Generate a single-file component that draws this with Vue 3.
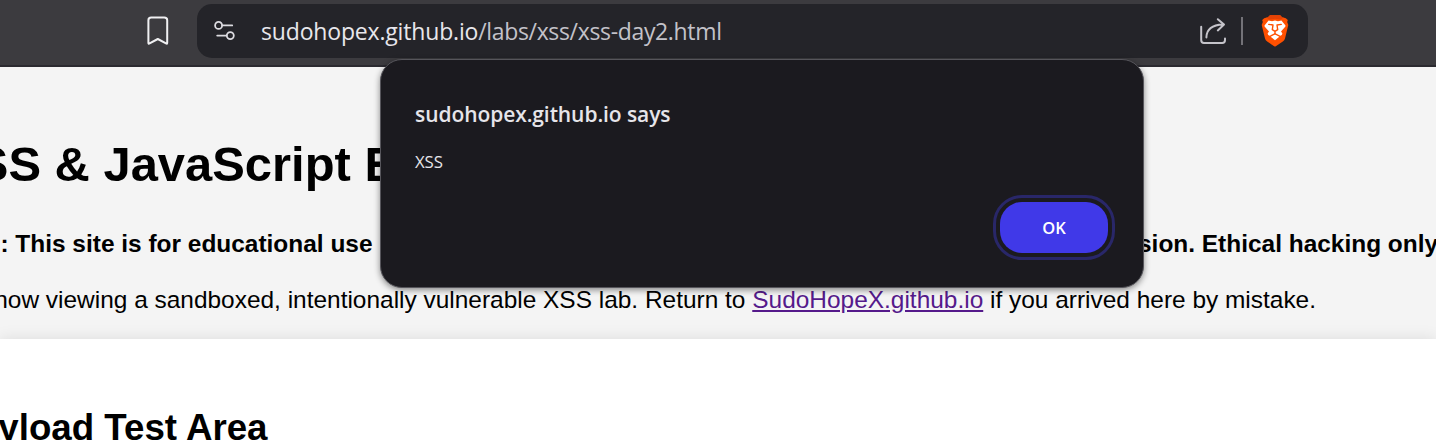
<script setup>
const host = 'sudohopex.github.io'
const path = '/labs/xss/xss-day2.html'
</script>

<template>
  <div class="browser">
    <header class="toolbar">
      <svg class="bookmark" viewBox="0 0 24 30" width="24" height="30">
        <path d="M2.4 27V4.3Q2.4 1.6 5.2 1.6H18.2Q21.2 1.6 21.2 4.3V27Q21.2 28.2 20 27.4L11.8 23L3.6 27.4Q2.4 28.2 2.4 27Z" />
      </svg>
      <div class="address">
        <svg class="tune" viewBox="0 0 22 20" width="22" height="20">
          <circle cx="4.6" cy="4.4" r="3.5" />
          <path d="M8.2 4.4H18.2M3.2 14.6H12.6" />
          <circle cx="16.3" cy="14.6" r="3.5" />
        </svg>
        <div class="url"><span class="host">{{ host }}</span><span class="path">{{ path }}</span></div>
        <svg class="share" viewBox="0 0 28 28" width="28" height="28">
          <path d="M2.2 9.8V23Q2.2 25.9 5 25.9H23.2Q26 25.9 26 23V21.6" />
          <path d="M7.4 20.4C7.6 12.6 13 8 24 7.6M18.8 2.2L25 7.6L18.8 13.4" />
        </svg>
        <i class="divider"></i>
        <svg class="brave" viewBox="0 0 28 32" width="28" height="32">
          <path fill="#ff5000" d="M9 0.2H19.2L21.4 2.5Q24.6 1.9 26.8 5L26.2 7L27.3 10L24 23.5Q23.5 25.4 21.8 26.6L14.8 31.2Q14 31.7 13.2 31.2L6.2 26.6Q4.5 25.4 4 23.5L.7 10L1.8 7L1.2 5Q3.4 1.9 6.6 2.5Z" />
          <path fill="#e54205" d="M9 0.2H19.2L21.4 2.5L22.7 2.3L20 4.6L14 3.8L8 4.6L5.3 2.3L6.6 2.5Z" />
          <path fill="#fff" d="M7.6 5.6L11 6.2L14 5.4L17 6.2L20.4 5.6L24.3 10.2Q24.8 11.1 24 12L20 16.4L21.4 18.4Q21.2 20.4 19.3 20.7L14 18L8.7 20.7Q6.8 20.4 6.6 18.4L8 16.4L4 12Q3.2 11.1 3.7 10.2Z" />
          <path fill="#fff" d="M14 19.4L18.3 21.8L14 25.2L9.7 21.8Z" />
          <path class="face" d="M7.8 9.4L12 10L11.3 14.6L14 16.4L16.7 14.6L16 10L20.2 9.4M14 16.4V19" />
        </svg>
      </div>
    </header>

    <main class="page">
      <section class="intro">
        <h1><span>SS &amp; JavaScript E</span></h1>
        <p class="warning">
          <strong class="lead"><span>: This site is for educational use</span></strong>
          <strong class="tail">sion. Ethical hacking only</strong>
        </p>
        <p class="notice">
          <span>now viewing a sandboxed, intentionally vulnerable XSS lab. Return to <a>SudoHopeX.github.io</a> if you arrived here by mistake.</span>
        </p>
      </section>
      <section class="card">
        <h2><span>yload Test Area</span></h2>
      </section>
    </main>

    <div class="dialog" role="alertdialog">
      <div class="title">{{ host }} says</div>
      <div class="message">XSS</div>
      <div class="actions"><button>OK</button></div>
    </div>
  </div>
</template>

<style>
html, body { margin: 0; overflow: hidden; }
</style>

<style scoped>
.browser {
  position: relative;
  width: 1436px;
  height: 440px;
  overflow: hidden;
  background: #f4f4f4;
  font-family: "Liberation Sans", Arial, sans-serif;
}
.toolbar {
  box-sizing: border-box;
  display: flex;
  align-items: flex-start;
  height: 67px;
  padding: 4px 128px 0 146px;
  background: #3c3b3f;
  border-bottom: 2px solid #2b2a30;
}
svg { display: block; flex: none; fill: none; stroke-linecap: round; stroke-linejoin: round; }
.bookmark { margin-top: 12px; stroke: #f0f0f2; stroke-width: 2; }
.address {
  box-sizing: border-box;
  display: flex;
  align-items: center;
  flex: 1;
  height: 54px;
  margin-left: 27px;
  padding: 0 19px 0 17px;
  border-radius: 15px;
  background: #242429;
}
.tune { stroke: #dcdbe0; stroke-width: 1.8; }
.url {
  flex: 1;
  margin-left: 25px;
  font-family: "Open Sans", "Noto Sans", sans-serif;
  font-size: 23px;
  line-height: 32px;
  white-space: nowrap;
}
.host { color: #e8e7ec; letter-spacing: -0.17px; }
.path { color: #c3c2c9; letter-spacing: -0.34px; }
.share { stroke: #c5c4ca; stroke-width: 2; }
.divider { width: 2px; height: 28px; margin: 0 18px 0 14px; background: #737278; }
.brave .face { stroke: #ff5000; stroke-width: 1.4; }

.intro { display: flex; flex-direction: column; height: 272px; color: #000; }
h1, h2, p { margin: 0; white-space: nowrap; }
h1 {
  display: flex;
  justify-content: flex-end;
  width: 397px;
  margin-top: 69px;
  font-size: 48.9px;
  line-height: 56px;
}
.warning {
  display: flex;
  margin-top: 38px;
  font-size: 24.45px;
  line-height: 28px;
}
.lead { display: flex; justify-content: flex-end; width: 372.5px; margin-right: 765.5px; flex: none; }
.notice {
  display: flex;
  justify-content: flex-end;
  width: 1316px;
  margin-top: 28px;
  font-size: 24.45px;
  line-height: 28px;
}
.notice a { color: #551a8b; text-decoration: underline; }
.card {
  height: 101px;
  background: #fff;
  box-shadow: 0 0 15px rgba(0, 0, 0, 0.1);
}
h2 {
  display: flex;
  justify-content: flex-end;
  width: 267.5px;
  padding-top: 68px;
  font-size: 36.7px;
  line-height: 42px;
}
.dialog {
  position: absolute;
  left: 380px;
  top: 59px;
  box-sizing: border-box;
  width: 764px;
  height: 229px;
  padding: 38px 35px 34px 34px;
  border: 1px solid #56555b;
  border-radius: 22px;
  background: #1b1a1f;
  box-shadow: 0 2px 6px rgba(0, 0, 0, 0.45);
  color: #e6e5ea;
  font-family: "Open Sans", "Noto Sans", sans-serif;
}
.title { font-size: 21px; font-weight: 600; line-height: 32px; letter-spacing: -0.08px; }
.message { margin-top: 19px; font-size: 16.8px; line-height: 26px; letter-spacing: -0.1px; }
.actions { display: flex; justify-content: flex-end; margin-top: 27px; }
button {
  width: 108px;
  height: 51px;
  padding: 0;
  border: 0;
  border-radius: 22px;
  outline: 3px solid #292769;
  outline-offset: 4px;
  background: #4039e8;
  color: #fff;
  font: 600 16.5px/51px "Open Sans", "Noto Sans", sans-serif;
}
</style>
